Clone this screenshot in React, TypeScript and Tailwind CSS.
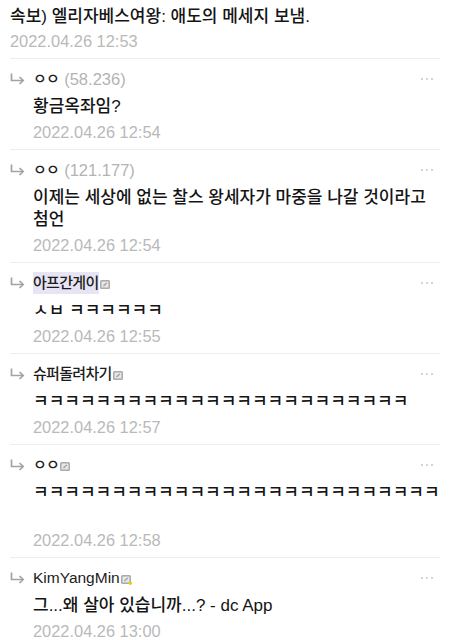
import React from "react";

const KR = { fontFamily: '"Liberation Sans", "Noto Sans CJK KR", sans-serif' };

function ReplyArrow() {
  return (
    <svg width="15" height="12" viewBox="0 0 15 12" className="shrink-0">
      <path d="M1.5 0.5 V7.5 H13" fill="none" stroke="#a3a3a3" strokeWidth="1.7" />
      <path d="M9.5 4 L13.2 7.5 L9.5 11" fill="none" stroke="#a3a3a3" strokeWidth="1.7" />
    </svg>
  );
}

function GalleryIcon({ yellow }: { yellow?: boolean }) {
  return (
    <svg width="11" height="10" viewBox="0 0 11 10" className="shrink-0 ml-[1px] mt-[3px]">
      <rect x="0" y="0" width="10" height="9" rx="1.5" fill="#ababab" />
      <rect x="1.5" y="1.5" width="7" height="6" rx="0.5" fill="#e6e6e6" />
      <path d="M3.5 6 L6.8 2.8" stroke="#9a9a9a" strokeWidth="1.1" />
      {yellow && <circle cx="9.3" cy="8.3" r="1.7" fill="#e6d200" />}
    </svg>
  );
}

function Dots() {
  return (
    <div className="ml-auto mr-[7px] flex gap-[2.5px]">
      <span className="w-[2.5px] h-[2.5px] rounded-full bg-[#c6c6c6]" />
      <span className="w-[2.5px] h-[2.5px] rounded-full bg-[#c6c6c6]" />
      <span className="w-[2.5px] h-[2.5px] rounded-full bg-[#c6c6c6]" />
    </div>
  );
}

type Row = {
  nick: string;
  latin?: boolean;
  ip?: string;
  icon?: boolean;
  yellow?: boolean;
  highlight?: boolean;
  nowrap?: boolean;
  lines: string[];
  time: string;
};

const rows: Row[] = [
  { nick: "ㅇㅇ", ip: "(58.236)", lines: ["황금옥좌임?"], time: "12:54" },
  {
    nick: "ㅇㅇ",
    ip: "(121.177)",
    lines: ["이제는 세상에 없는 찰스 왕세자가 마중을 나갈 것이라고 첨언"],
    time: "12:54",
  },
  { nick: "아프간게이", icon: true, highlight: true, lines: ["ㅅㅂ ㅋㅋㅋㅋㅋㅋ"], time: "12:55" },
  { nick: "슈퍼돌려차기", icon: true, nowrap: true, lines: ["ㅋ".repeat(24)], time: "12:57" },
  { nick: "ㅇㅇ", icon: true, nowrap: true, lines: ["ㅋ".repeat(26), ""], time: "12:58" },
  {
    nick: "KimYangMin",
    latin: true,
    icon: true,
    yellow: true,
    lines: ["그...왜 살아 있습니까...? - dc App"],
    time: "13:00",
  },
];

function Date({ t }: { t: string }) {
  return (
    <div
      className="text-[16.4px] leading-[20px] text-[#b9b9b9]"
      style={{ fontFamily: '"Liberation Sans", sans-serif' }}
    >
      2022.04.26 {t}
    </div>
  );
}

export default function App() {
  return (
    <div className="w-[450px] h-[640px] overflow-hidden bg-white px-[10px] text-[#141414]" style={KR}>
      <div className="pt-[6px] pb-[7px]">
        <div className="text-[17px] leading-[22px] font-medium">
          속보) 엘리자베스여왕: 애도의 메세지 보냄.
        </div>
        <div className="mt-[3px]">
          <Date t="12:53" />
        </div>
      </div>
      {rows.map((r, i) => (
        <div key={i} className="border-t border-[#ededed] pt-[10px] pb-[7px]">
          <div className="flex items-center h-[20px]">
            <div className="w-[23px] flex items-center">
              <ReplyArrow />
            </div>
            <div className="flex items-center">
              <span
                className={
                  (r.latin
                    ? "text-[15.5px] tracking-[0px]"
                    : "text-[15px] tracking-[-0.7px]") +
                  (r.highlight ? " bg-[#e7e5f4] leading-[22px]" : " leading-[20px]") +
                  " text-[#1c1c1c] font-medium"
                }
              >
                {r.nick}
              </span>
              {r.ip && (
                <span
                  className="ml-[5px] text-[16.5px] leading-[20px] text-[#b3b3b3]"
                  style={{ fontFamily: '"Liberation Sans", sans-serif' }}
                >
                  {r.ip}
                </span>
              )}
              {r.icon && <GalleryIcon yellow={r.yellow} />}
            </div>
            <Dots />
          </div>
          <div className="pl-[23px] mt-[7px]">
            {r.lines.map((l, j) => (
              <div
                key={j}
                className={
                  "text-[17px] leading-[22px] font-medium" + (r.nowrap ? " whitespace-nowrap" : "")
                }
              >
                {l === "" ? "\u00a0" : l}
              </div>
            ))}
            <div className="mt-[4px]">
              <Date t={r.time} />
            </div>
          </div>
        </div>
      ))}
    </div>
  );
}
